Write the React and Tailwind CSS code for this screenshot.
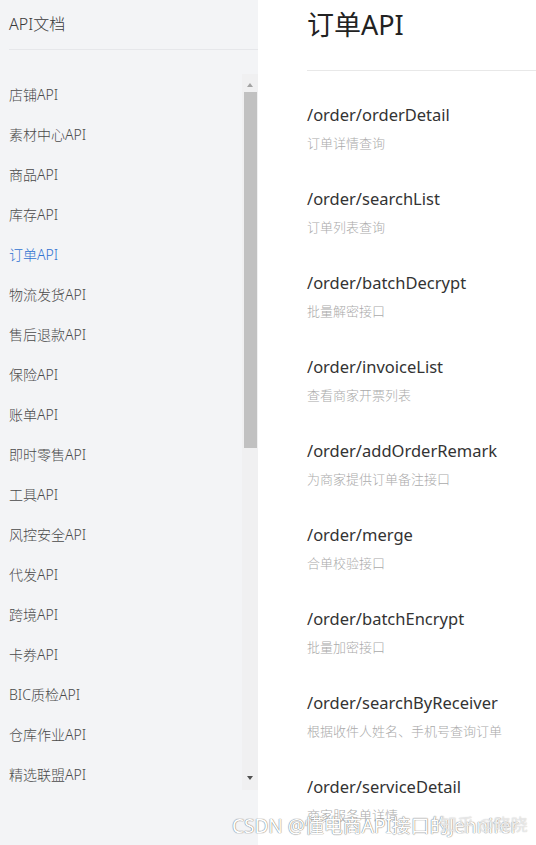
import React from "react";

const menu = [
  "店铺API","素材中心API","商品API","库存API","订单API","物流发货API","售后退款API","保险API","账单API","即时零售API","工具API","风控安全API","代发API","跨境API","卡券API","BIC质检API","仓库作业API","精选联盟API",
];

const apis = [
  ["/order/orderDetail","订单详情查询"],
  ["/order/searchList","订单列表查询"],
  ["/order/batchDecrypt","批量解密接口"],
  ["/order/invoiceList","查看商家开票列表"],
  ["/order/addOrderRemark","为商家提供订单备注接口"],
  ["/order/merge","合单校验接口"],
  ["/order/batchEncrypt","批量加密接口"],
  ["/order/searchByReceiver","根据收件人姓名、手机号查询订单"],
  ["/order/serviceDetail","商家服务单详情"],
];

export default function App() {
  return (
    <div
      className="relative flex w-[536px] h-[845px] overflow-hidden bg-white"
      style={{ fontFamily: '"Microsoft YaHei", "Noto Sans", "Noto Sans CJK SC", sans-serif' }}
    >
      <aside className="flex flex-col w-[258px] shrink-0 bg-[#f3f4f6]">
        <div className="ml-[9px] h-[50px] flex items-center border-b border-[#e6e7ea] text-[16px] text-[#3a3a3a] font-light pb-[2px]">
          API文档
        </div>
        <div className="flex mt-[24px] h-[716px]">
          <ul className="flex-1 pl-[9px]">
            {menu.map((m) => (
              <li
                key={m}
                className={`h-[40px] flex items-center text-[14px] font-light ${m === "订单API" ? "text-[#2f72d1]" : "text-[#4a4a4a]"}`}
              >
                {m}
              </li>
            ))}
          </ul>
          <div className="w-[16px] flex flex-col items-center bg-[#f0f0f1]">
            <div className="h-[18px] flex items-end justify-center pb-[5px]">
              <div className="w-0 h-0 border-l-[3px] border-r-[3px] border-b-[4px] border-l-transparent border-r-transparent border-b-[#a3a3a3]" />
            </div>
            <div className="w-[13px] h-[356px] bg-[#c1c1c1]" />
            <div className="flex-1" />
            <div className="h-[16px] flex items-start justify-center pt-[2px]">
              <div className="w-0 h-0 border-l-[3px] border-r-[3px] border-t-[4px] border-l-transparent border-r-transparent border-t-[#505050]" />
            </div>
          </div>
        </div>
      </aside>
      <main className="flex-1 pl-[49px]">
        <h1 className="h-[50px] flex items-center text-[27px] text-[#222] font-normal">订单API</h1>
        <div className="mt-[20px] border-t border-[#e8e8e8]" />
        <div className="pt-[30px]">
          {apis.map(([p, d]) => (
            <div key={p} className="h-[84px]">
              <div className="h-[28px] flex items-center text-[16.5px] text-[#333]">{p}</div>
              <div className="mt-[5px] h-[20px] flex items-center text-[13px] text-[#aaa] font-light">{d}</div>
            </div>
          ))}
        </div>
      </main>
      <div
        className="absolute left-[232px] top-[812px] text-[19px] text-white whitespace-nowrap"
        style={{ textShadow: "0 0 1px #777, 0 0 1px #777" }}
      >
        CSDN @懂电商API接口的Jennifer
      </div>
      <div
        className="absolute left-[440px] top-[812px] text-[17px] text-white/60 whitespace-nowrap"
        style={{ textShadow: "0 0 1px #bbb" }}
      >
        知乎 @晓晓
      </div>
    </div>
  );
}
